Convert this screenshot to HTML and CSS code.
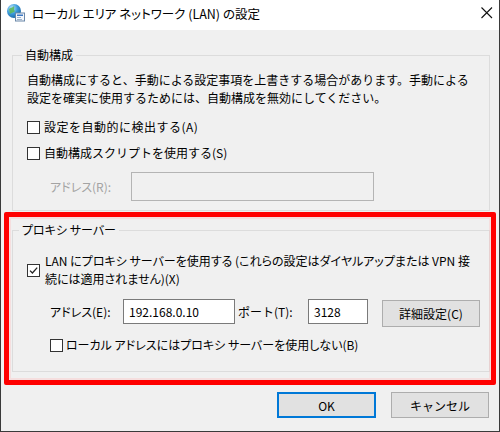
FILE: index.html
```html
<!DOCTYPE html>
<html lang="ja">
<head>
<meta charset="utf-8">
<title>ローカル エリア ネットワーク (LAN) の設定</title>
<link rel="stylesheet" href="styles.css">
</head>
<body>
<div class="window">
  <div class="titlebar">
    <svg class="app-icon" width="20" height="20" viewBox="0 0 20 20" aria-hidden="true">
      <defs>
        <radialGradient id="g" cx="0.35" cy="0.3" r="0.8">
          <stop offset="0" stop-color="#bfe8ff"/>
          <stop offset="0.5" stop-color="#3a9ad9"/>
          <stop offset="1" stop-color="#1a5f9e"/>
        </radialGradient>
      </defs>
      <circle cx="8" cy="8" r="7" fill="url(#g)"/>
      <path d="M3 6 C5 4 7 5 8 3 C9 5 7 7 9 8 C8 10 6 9 4 11 Z" fill="#5cb85c" opacity="0.9"/>
      <rect x="9.5" y="10" width="9" height="8" fill="#f4f7fb" stroke="#6a87a8" stroke-width="1"/>
      <rect x="11" y="11.5" width="6" height="1.5" fill="#3b78c4"/>
      <rect x="11" y="14" width="4" height="1" fill="#9db3cc"/>
      <rect x="11" y="16" width="5" height="1" fill="#9db3cc"/>
    </svg>
    <span class="title">ローカル エリア ネットワーク (LAN) の設定</span>
    <svg class="close" width="12" height="12" viewBox="0 0 12 12" aria-hidden="true">
      <path d="M0.5 0.5 L11 11 M11 0.5 L0.5 11" stroke="#111" stroke-width="1.1" fill="none"/>
    </svg>
  </div>

  <div class="content">
    <fieldset class="group group-auto">
      <legend>自動構成</legend>
      <p class="desc">自動構成にすると、手動による設定事項を上書きする場合があります。手動による<br>設定を確実に使用するためには、自動構成を無効にしてください。</p>
      <div class="check-row row-a">
        <span class="box"></span><span class="label">設定を自動的に検出する(A)</span>
      </div>
      <div class="check-row row-s">
        <span class="box"></span><span class="label">自動構成スクリプトを使用する(S)</span>
      </div>
      <div class="field-row row-r">
        <span class="field-label kana disabled">アドレス(R):</span>
        <span class="input input-disabled"></span>
      </div>
    </fieldset>

    <fieldset class="group group-proxy">
      <legend class="kana">プロキシ サーバー</legend>
      <div class="check-row row-x">
        <span class="box checked">
          <svg width="11" height="11" viewBox="0 0 11 11" aria-hidden="true"><path d="M2 5.6 L4.4 8 L9.2 2.6" stroke="#222" stroke-width="1.3" fill="none"/></svg>
        </span>
        <span class="label two-line kana">LAN にプロキシ サーバーを使用する (これらの設定はダイヤルアップまたは VPN 接<br>続には適用されません)(X)</span>
      </div>
      <div class="field-row row-e">
        <span class="field-label kana label-e">アドレス(E):</span>
        <span class="input input-addr">192.168.0.10</span>
        <span class="field-label label-t">ポート(T):</span>
        <span class="input input-port">3128</span>
        <span class="btn btn-adv">詳細設定(C)</span>
      </div>
      <div class="check-row row-b">
        <span class="box"></span><span class="label kana">ローカル アドレスにはプロキシ サーバーを使用しない(B)</span>
      </div>
    </fieldset>

    <div class="buttons">
      <span class="btn btn-ok">OK</span>
      <span class="btn btn-cancel">キャンセル</span>
    </div>
  </div>

  <div class="highlight"></div>
</div>
</body>
</html>
```

FILE: styles.css
```css
* { box-sizing: border-box; }

html, body {
  margin: 0;
  padding: 0;
  background: #ffffff;
}

body {
  font-family: "Noto Sans CJK JP", "Noto Sans", sans-serif;
  font-size: 12px;
  color: #000;
}

.kana {
  font-feature-settings: "palt";
}

.window {
  position: relative;
  width: 500px;
  height: 432px;
  background: #f0f0f0;
  border-left: 1px solid #3a3a3a;
  border-right: 1px solid #3a3a3a;
  border-bottom: 1px solid #3a3a3a;
  overflow: hidden;
}

.titlebar {
  height: 30px;
  background: #ffffff;
  display: flex;
  align-items: flex-start;
  padding-left: 5px;
}

.app-icon {
  margin-top: 3px;
  flex: none;
}

.title {
  margin-left: 6px;
  margin-top: 6px;
  font-size: 12.5px;
  line-height: 16px;
  color: #000;
  font-feature-settings: "palt";
  white-space: nowrap;
}

.close {
  margin-left: auto;
  margin-right: 6px;
  margin-top: 7px;
  flex: none;
}

.content {
  padding: 0 9px 0 11px;
}

.group {
  margin: 0;
  border: 1px solid #dcdcdc;
  padding: 0;
  min-width: 0;
}

.group legend {
  margin-left: -5px;
  padding: 0 3px;
  line-height: 16px;
  font-size: 12px;
}

.group-proxy legend {
  margin-left: -8px;
}

.group-auto {
  margin-top: 17px;
  padding: 0 0 9px 14px;
}

.group-proxy {
  margin-top: 11px;
  padding: 0 0 17px 14px;
}

.desc {
  margin: 8px 0 0 0;
  line-height: 18px;
  white-space: nowrap;
}

.check-row {
  display: flex;
  align-items: center;
}

.check-row .label {
  line-height: 18px;
  white-space: nowrap;
  margin-left: 4px;
}

.box {
  width: 13px;
  height: 13px;
  border: 1px solid #333;
  background: #fff;
  flex: none;
  display: flex;
  align-items: center;
  justify-content: center;
}

.row-a { margin-top: 11px; }
.row-a .label { letter-spacing: 0.5px; }
.row-s { margin-top: 8px; }

.field-row {
  display: flex;
  align-items: flex-start;
}

.field-label {
  white-space: nowrap;
  flex: none;
}

.disabled {
  color: #a3a3a3;
}

.row-r {
  margin-top: 10px;
  padding-left: 23px;
}

.row-r .field-label {
  width: 81px;
  line-height: 29px;
}

.input {
  display: block;
  flex: none;
  background: #fff;
  border: 1px solid #7a7a7a;
  height: 25px;
  line-height: 23px;
  padding-left: 5px;
  white-space: nowrap;
}

.input-disabled {
  width: 243px;
  height: 29px;
  background: #f0f0f0;
  border-color: #b4b4b4;
}

.row-x { margin-top: 14px; }
.row-x .label.two-line {
  margin-left: 5px;
}

.row-e {
  margin-top: 11px;
  padding-left: 23px;
}

.row-e .field-label {
  line-height: 25px;
}

.label-e { width: 73px; }
.input-addr { width: 112px; }
.label-t {
  width: 73px;
  padding-left: 3px;
}
.input-port { width: 60px; }

.btn {
  display: flex;
  align-items: center;
  justify-content: center;
  background: #e1e1e1;
  border: 1px solid #adadad;
  white-space: nowrap;
  flex: none;
}

.btn-adv {
  width: 98px;
  height: 27px;
  margin-top: 1px;
  margin-left: 14px;
}

.row-b {
  margin-top: 9px;
  padding-left: 23px;
}

.row-b .label { margin-left: 3px; }

.buttons {
  display: flex;
  justify-content: flex-end;
  gap: 15px;
  margin-top: 20px;
  margin-right: 1px;
}

.btn-ok,
.btn-cancel {
  width: 98px;
  height: 26px;
}

.btn-ok {
  width: 99px;
  border: 2px solid #0078d7;
}

.highlight {
  position: absolute;
  left: 3px;
  top: 212px;
  width: 492px;
  height: 173px;
  border: 5px solid #ff0000;
  border-radius: 2px;
  box-shadow: inset 0 0 0 2px rgba(255, 190, 190, 0.35);
  pointer-events: none;
}
```
